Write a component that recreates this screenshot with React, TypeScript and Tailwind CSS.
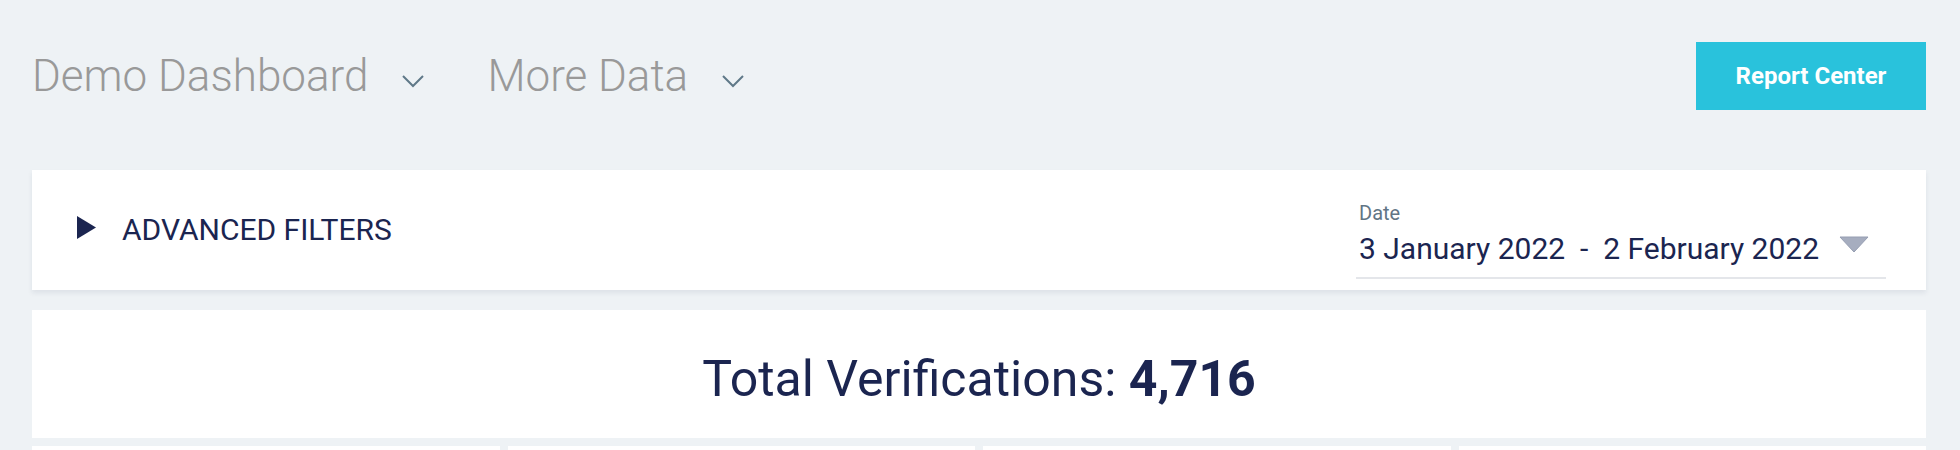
import React from "react";

function Chevron() {
  return (
    <svg width="24" height="14" viewBox="0 0 24 14" className="mt-[10px]">
      <polyline points="2,2 12,12 22,2" fill="none" stroke="#5f7888" strokeWidth="2" />
    </svg>
  );
}

function NavItem({ label }: { label: string }) {
  return (
    <div className="flex items-center">
      <span className="text-[44px] leading-[44px] font-light text-[#999999]">{label}</span>
      <span className="ml-[33px]">
        <Chevron />
      </span>
    </div>
  );
}

export default function App() {
  return (
    <div className="min-h-screen bg-[#eef2f5] pl-8 pr-[34px] font-['Roboto','Liberation_Sans',sans-serif]">
      <header className="flex items-center justify-between pt-[42px]">
        <nav className="flex items-center gap-[62px]">
          <NavItem label="Demo Dashboard" />
          <NavItem label="More Data" />
        </nav>
        <button className="h-[68px] w-[230px] bg-[#29c2dc] text-[24px] font-bold text-white">
          Report Center
        </button>
      </header>

      <section className="mt-[60px] flex h-[120px] justify-between bg-white shadow-[0_3px_5px_rgba(30,40,80,0.08)]">
        <div className="flex items-center pl-[45px]">
          <svg width="20" height="24" viewBox="0 0 20 24" className="-mt-[4px]">
            <polygon points="0,0 19,11.5 0,23" fill="#1b2550" />
          </svg>
          <span className="ml-[25px] text-[30px] leading-[36px] text-[#1b2550]">ADVANCED FILTERS</span>
        </div>
        <div className="mr-[40px] pt-[32px]">
          <div className="w-[530px] border-b-2 border-[#e4e6ea] pb-[10px] pl-[3px]">
            <div className="text-[20px] leading-[22px] text-[#617585]">Date</div>
            <div className="mt-[7px] flex items-start justify-between pr-[17px]">
              <span className="whitespace-pre text-[30px] leading-[36px] text-[#1b2550]">
                {"3 January 2022  -  2 February 2022"}
              </span>
              <svg width="30" height="17" viewBox="0 0 30 17" className="mt-[5px]">
                <polygon points="1,1 29,1 15,16" fill="#a6adbf" stroke="#969eb2" strokeWidth="1" />
              </svg>
            </div>
          </div>
        </div>
      </section>

      <section className="mt-[20px] bg-white pb-[29px] pt-[39px] text-center text-[50px] leading-[60px] text-[#1b2550]">
        Total Verifications: <span className="font-bold">4,716</span>
      </section>

      <div className="mt-2 grid grid-cols-4 gap-2">
        <div className="h-[200px] bg-white" />
        <div className="h-[200px] bg-white" />
        <div className="h-[200px] bg-white" />
        <div className="h-[200px] bg-white" />
      </div>
    </div>
  );
}
